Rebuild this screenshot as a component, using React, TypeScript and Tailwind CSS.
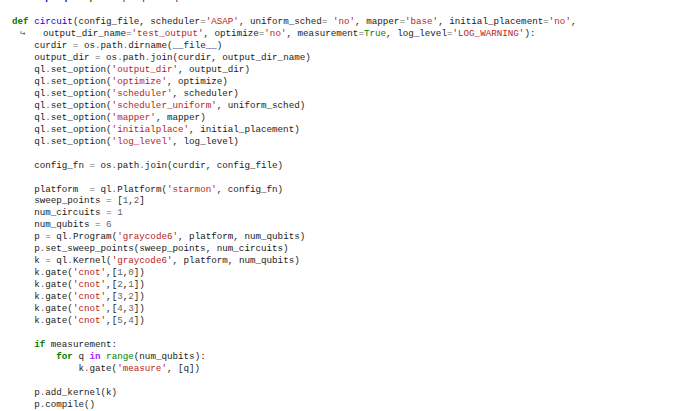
type Tok = [string, string?];

const K = "text-[#008000] font-bold";
const KC = "text-[#008000]";
const NS = "text-[#0000FF] font-bold";
const F = "text-[#0000FF]";
const S = "text-[#BA2121]";
const O = "text-[#666666]";
const OW = "text-[#AA22FF] font-bold";
const B = "text-[#008000]";
const M = "text-[#19177C]";

const lines: Tok[][] = [
  [["from", K], [" "], ["openql", NS], [" "], ["import", K], [" openql "], ["as", K], [" ql"]],
  [],
  [
    ["def", K], [" "], ["circuit", F], ["(config_file, scheduler"], ["=", O], ["'ASAP'", S],
    [", uniform_sched"], ["=", O], [" "], ["'no'", S], [", mapper"], ["=", O], ["'base'", S],
    [", initial_placement"], ["=", O], ["'no'", S], [","],
  ],
  [
    ["output_dir_name"], ["=", O], ["'test_output'", S], [", optimize"], ["=", O], ["'no'", S],
    [", measurement"], ["=", O], ["True", KC], [", log_level"], ["=", O], ["'LOG_WARNING'", S], ["):"],
  ],
  [["    curdir "], ["=", O], [" os"], [".", O], ["path"], [".", O], ["dirname("], ["__file__", M], [")"]],
  [["    output_dir "], ["=", O], [" os"], [".", O], ["path"], [".", O], ["join(curdir, output_dir_name)"]],
  [["    ql"], [".", O], ["set_option("], ["'output_dir'", S], [", output_dir)"]],
  [["    ql"], [".", O], ["set_option("], ["'optimize'", S], [", optimize)"]],
  [["    ql"], [".", O], ["set_option("], ["'scheduler'", S], [", scheduler)"]],
  [["    ql"], [".", O], ["set_option("], ["'scheduler_uniform'", S], [", uniform_sched)"]],
  [["    ql"], [".", O], ["set_option("], ["'mapper'", S], [", mapper)"]],
  [["    ql"], [".", O], ["set_option("], ["'initialplace'", S], [", initial_placement)"]],
  [["    ql"], [".", O], ["set_option("], ["'log_level'", S], [", log_level)"]],
  [],
  [["    config_fn "], ["=", O], [" os"], [".", O], ["path"], [".", O], ["join(curdir, config_file)"]],
  [],
  [["    platform  "], ["=", O], [" ql"], [".", O], ["Platform("], ["'starmon'", S], [", config_fn)"]],
  [["    sweep_points "], ["=", O], [" ["], ["1", O], [","], ["2", O], ["]"]],
  [["    num_circuits "], ["=", O], [" "], ["1", O]],
  [["    num_qubits "], ["=", O], [" "], ["6", O]],
  [["    p "], ["=", O], [" ql"], [".", O], ["Program("], ["'graycode6'", S], [", platform, num_qubits)"]],
  [["    p"], [".", O], ["set_sweep_points(sweep_points, num_circuits)"]],
  [["    k "], ["=", O], [" ql"], [".", O], ["Kernel("], ["'graycode6'", S], [", platform, num_qubits)"]],
  [["    k"], [".", O], ["gate("], ["'cnot'", S], [",["], ["1", O], [","], ["0", O], ["])"]],
  [["    k"], [".", O], ["gate("], ["'cnot'", S], [",["], ["2", O], [","], ["1", O], ["])"]],
  [["    k"], [".", O], ["gate("], ["'cnot'", S], [",["], ["3", O], [","], ["2", O], ["])"]],
  [["    k"], [".", O], ["gate("], ["'cnot'", S], [",["], ["4", O], [","], ["3", O], ["])"]],
  [["    k"], [".", O], ["gate("], ["'cnot'", S], [",["], ["5", O], [","], ["4", O], ["])"]],
  [],
  [["    "], ["if", K], [" measurement:"]],
  [["        "], ["for", K], [" q "], ["in", OW], [" "], ["range", B], ["(num_qubits):"]],
  [["            k"], [".", O], ["gate("], ["'measure'", S], [", [q])"]],
  [],
  [["    p"], [".", O], ["add_kernel(k)"]],
  [["    p"], [".", O], ["compile()"]],
];

export default function App() {
  return (
    <div className="w-[675px] h-[411px] overflow-hidden bg-white">
      <pre
        className="mt-[-8px] pl-[12px] text-[9.23px] leading-[11.97px] text-[#1a1a1a]"
        style={{ fontFamily: '"Liberation Mono", monospace' }}
      >
        {lines.map((toks, i) => (
          <div key={i} className="h-[11.97px] whitespace-pre">
            {i === 3 ? (
              <>
                <span className="inline-block w-[31px] pl-[8px] text-[#666666]">↪</span>
                {toks.map(([t, c], j) => (
                  <span key={j} className={c}>{t}</span>
                ))}
              </>
            ) : (
              toks.map(([t, c], j) => (
                <span key={j} className={c}>{t}</span>
              ))
            )}
          </div>
        ))}
      </pre>
    </div>
  );
}
